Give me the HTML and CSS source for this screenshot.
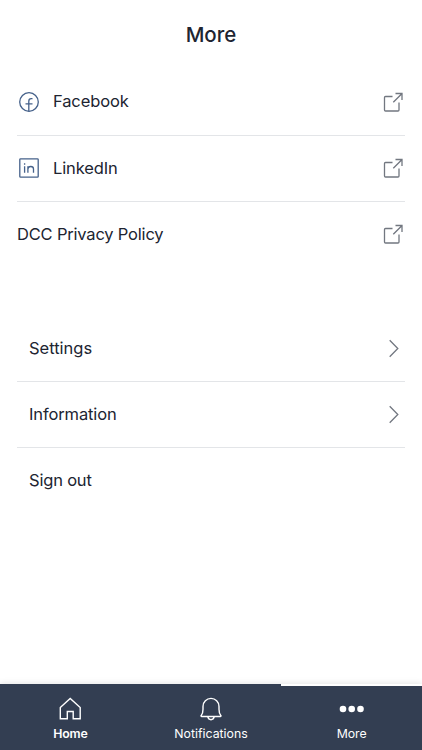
FILE: index.html
```
<!DOCTYPE html>
<html lang="en">
<head>
<meta charset="utf-8">
<meta name="viewport" content="width=device-width">
<title>More</title>
<link rel="stylesheet" href="styles.css">
</head>
<body>
<svg class="symbols" aria-hidden="true">
  <symbol id="external" viewBox="0 0 20 20"><path d="M9.500 4.500H2.500q-1 0-1 1V18q0 1 1 1H15q1 0 1-1v-7.500M10.300 10.200 18.800 1.700M12.500 1.500H19v6.500"/></symbol>
  <symbol id="chevron" viewBox="0 0 20 20"><path d="m6.700 2.300 8.100 8.200-8.100 8.200"/></symbol>
</svg>
<header class="title">More</header>
<main>
  <nav class="links">
    <a class="row"><svg class="brand" viewBox="0 0 20 20"><circle cx="10" cy="10" r="9.300"/><path d="M9.800 19.300V9.200Q9.800 6.600 12.200 6.600h1.300M6.500 11.800h7"/></svg><span>Facebook</span><svg class="end"><use href="#external"/></svg></a>
    <a class="row"><svg class="brand" viewBox="0 0 20 20"><rect x=".8" y=".8" width="18.400" height="18.400" rx=".8"/><path d="M5.600 8.200v6.600M5.600 5.300v1.400M8.900 14.800V8.200M8.900 11q.2-2.500 2.900-2.500t2.700 2.500v3.800"/></svg><span>LinkedIn</span><svg class="end"><use href="#external"/></svg></a>
    <a class="row"><span>DCC Privacy Policy</span><svg class="end"><use href="#external"/></svg></a>
  </nav>
  <nav class="options">
    <a class="row"><span>Settings</span><svg class="end"><use href="#chevron"/></svg></a>
    <a class="row"><span>Information</span><svg class="end"><use href="#chevron"/></svg></a>
    <a class="row"><span>Sign out</span></a>
  </nav>
</main>
<footer class="tabs">
  <a class="tab current"><svg viewBox="0 0 24 24"><path d="M2.300 10.500 12.200 1.500l10 9v11.300h-7v-7.300H9.300v7.300h-7z"/></svg><span>Home</span></a>
  <a class="tab"><svg viewBox="0 0 24 24"><path d="M2.500 19.500c-.7 0-.7-.8-.2-1.300 1.300-1.500 1.700-3.300 1.700-6V9.400a8 8 0 0 1 16 0v2.800c0 2.700.4 4.500 1.700 6 .5.500.5 1.300-.2 1.300zM8.700 19.700q.7 3 3.300 3t3.300-3"/></svg><span>Notifications</span></a>
  <a class="tab selected"><svg class="dots" viewBox="0 0 26 24"><circle cx="4" cy="12" r="3.300"/><circle cx="12.700" cy="12" r="3.300"/><circle cx="21.500" cy="12" r="3.300"/></svg><span>More</span></a>
</footer>
</body>
</html>
```
FILE: styles.css
```
* { box-sizing: border-box; }
body { margin: 0; height: 750px; display: flex; flex-direction: column; background: #fff; color: #202431; font: 16.5px/24px Inter, sans-serif; letter-spacing: -.12px; overflow: hidden; }
svg { fill: none; stroke: currentColor; stroke-width: 1.3; flex: none; }
.symbols { position: absolute; width: 0; height: 0; }
.title { height: 69px; text-align: center; font-size: 20.5px; font-weight: 500; line-height: 69px; letter-spacing: 0; }
main { flex: 1; padding: 0 17px; }
.row { display: flex; align-items: center; height: 66px; }
.row + .row { border-top: 1px solid #e3e5e8; }
.row span { padding-bottom: 2px; }
.row + .row .brand, .row + .row .end { margin-top: -1px; }
.row:nth-child(3) span { letter-spacing: -.19px; }
.brand { width: 20px; height: 20px; margin: 0 14px 0 2px; color: #45618a; }
.end { width: 20px; height: 20px; margin-left: auto; margin-right: 2px; color: #727780; }
.options { margin-top: 48px; }
.options .row { padding-left: 12px; }
.options .row:first-child span { padding-bottom: 0; letter-spacing: 0; }
.tabs { height: 66px; display: flex; background: #333e52; color: #fff; box-shadow: 0 -1px 6px rgba(0, 0, 0, .1); letter-spacing: 0; }
.tab { flex: 1 1 0; display: flex; flex-direction: column; align-items: center; padding-top: 13px; font-size: 12.3px; line-height: 20px; }
.tab svg { width: 24px; height: 24px; margin-bottom: 3px; stroke-width: 1.4; }
.tab svg.dots { width: 26px; fill: currentColor; stroke: none; }
.selected { border-top: 2px solid #fff; padding-top: 11px; }
.current { font-weight: 600; letter-spacing: -.15px; }
```
